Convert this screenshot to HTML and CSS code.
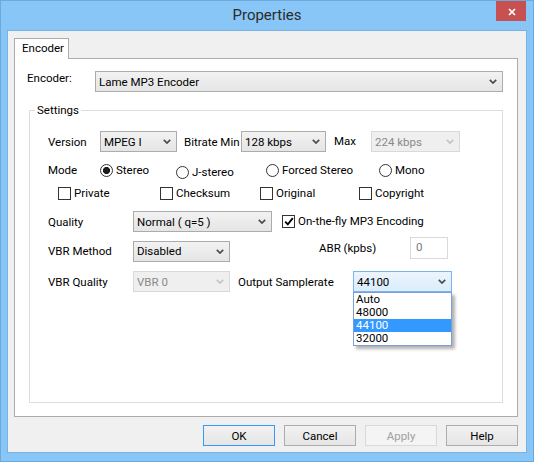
FILE: index.html
```html
<!DOCTYPE html>
<html>
<head>
<meta charset="utf-8">
<link rel="stylesheet" href="styles.css">
</head>
<body>
<div class="window">
  <div class="titlebar">
    <div class="title">Properties</div>
    <div class="close"><svg width="8" height="8" viewBox="0 0 8 8"><path d="M1 1L7 7M7 1L1 7" stroke="#fff" stroke-width="1.7" fill="none"/></svg></div>
  </div>
  <div class="client">
    <div class="tabs"><div class="tab">Encoder</div></div>
    <div class="panel">
      <div class="enc-row">
        <span class="enc-label">Encoder:</span>
        <div class="combo grow"><span class="val">Lame MP3 Encoder</span><svg class="chev" viewBox="0 0 8 5"><path d="M0.8 0.8L4 4L7.2 0.8"/></svg></div>
      </div>
      <fieldset class="group">
        <legend class="legend">Settings</legend>
        <div class="gbody">
          <div class="row">
            <span class="lbl w52">Version</span>
            <div class="combo w77"><span class="val">MPEG I</span><svg class="chev" viewBox="0 0 8 5"><path d="M0.8 0.8L4 4L7.2 0.8"/></svg></div>
            <span class="lbl ml7 w57">Bitrate Min</span>
            <div class="combo w85"><span class="val">128 kbps</span><svg class="chev" viewBox="0 0 8 5"><path d="M0.8 0.8L4 4L7.2 0.8"/></svg></div>
            <span class="lbl ml8 w37 up1">Max</span>
            <div class="combo w89 disabled"><span class="val">224 kbps</span><svg class="chev" viewBox="0 0 8 5"><path d="M0.8 0.8L4 4L7.2 0.8"/></svg></div>
          </div>
          <div class="row mode">
            <span class="lbl w52">Mode</span>
            <span class="opt w76"><span class="radio on"></span><span>Stereo</span></span>
            <span class="opt w90 low"><span class="radio"></span><span>J-stereo</span></span>
            <span class="opt w113"><span class="radio"></span><span>Forced Stereo</span></span>
            <span class="opt"><span class="radio"></span><span>Mono</span></span>
          </div>
          <div class="row checks">
            <span class="opt w102"><span class="check"></span><span>Private</span></span>
            <span class="opt w100"><span class="check"></span><span>Checksum</span></span>
            <span class="opt w99"><span class="check"></span><span>Original</span></span>
            <span class="opt"><span class="check"></span><span>Copyright</span></span>
          </div>
          <div class="row quality">
            <span class="lbl w85">Quality</span>
            <div class="combo w139"><span class="val">Normal ( q=5 )</span><svg class="chev" viewBox="0 0 8 5"><path d="M0.8 0.8L4 4L7.2 0.8"/></svg></div>
            <span class="opt ml10"><span class="check"><svg width="10" height="9" viewBox="0 0 10 9"><path d="M1.2 4.6L3.8 7.3L8.8 1.2" stroke="#000" stroke-width="1.9" fill="none"/></svg></span><span>On-the-fly MP3 Encoding</span></span>
          </div>
          <div class="row vbrm">
            <span class="lbl w85 mt4">VBR Method</span>
            <div class="combo w97 mt4"><span class="val">Disabled</span><svg class="chev" viewBox="0 0 8 5"><path d="M0.8 0.8L4 4L7.2 0.8"/></svg></div>
            <span class="lbl ml89 w91 tall">ABR (kpbs)</span>
            <div class="edit">0</div>
          </div>
          <div class="row vbrq">
            <span class="lbl w85">VBR Quality</span>
            <div class="combo w97 disabled"><span class="val">VBR 0</span><svg class="chev" viewBox="0 0 8 5"><path d="M0.8 0.8L4 4L7.2 0.8"/></svg></div>
            <span class="lbl ml8 w115">Output Samplerate</span>
            <div class="combo w99 focus"><span class="val">44100</span><svg class="chev" viewBox="0 0 8 5"><path d="M0.8 0.8L4 4L7.2 0.8"/></svg>
              <div class="list">
                <div class="item">Auto</div>
                <div class="item">48000</div>
                <div class="item sel">44100</div>
                <div class="item">32000</div>
              </div>
            </div>
          </div>
        </div>
      </fieldset>
    </div>
    <div class="buttons">
      <div class="btn default">OK</div>
      <div class="btn">Cancel</div>
      <div class="btn disabled">Apply</div>
      <div class="btn">Help</div>
    </div>
  </div>
</div>
</body>
</html>
```
FILE: styles.css
```css
* { box-sizing: border-box; }
html, body { margin: 0; padding: 0; }
body {
  width: 534px;
  height: 462px;
  overflow: hidden;
  font-family: Roboto, "Noto Sans", sans-serif;
  font-size: 11.5px;
  color: #000;
}
.window {
  width: 534px;
  height: 462px;
  background: #89c6f8;
  border: 1px solid #6ea9de;
  display: flex;
  flex-direction: column;
}
.titlebar {
  height: 29px;
  display: flex;
  flex-shrink: 0;
}
.title {
  flex: 1;
  text-align: center;
  padding-left: 37px;
  line-height: 28px;
  font-size: 15px;
  color: #2b2b2b;
}
.close {
  width: 30px;
  height: 20px;
  margin-right: 7px;
  background: #c75050;
  display: flex;
  align-items: center;
  justify-content: center;
  padding-top: 2px;
  padding-left: 1px;
}
.client {
  margin: 0 6px;
  height: 423px;
  flex-shrink: 0;
  background: #f0f0f0;
  border: 1px solid #7cb0e0;
  padding-top: 7px;
}
.tabs {
  display: flex;
  padding-left: 6px;
}
.tab {
  width: 55px;
  height: 21px;
  margin-bottom: -1px;
  border: 1px solid #acacac;
  border-bottom: none;
  background: #fff;
  position: relative;
  z-index: 1;
  padding-left: 7px;
  line-height: 18px;
}
.panel {
  margin-left: 6px;
  width: 504px;
  height: 359px;
  border: 1px solid #acacac;
  background: #fff;
  padding: 12px 14px 0 12px;
}
.enc-row {
  display: flex;
  height: 21px;
}
.enc-label {
  width: 68px;
  line-height: 15px;
  flex-shrink: 0;
}
.grow { flex: 1; }
.group {
  margin: 11px 0 0 2px;
  padding: 0;
  border: 1px solid #dcdcdc;
  height: 300px;
  min-width: 0;
}
.legend {
  margin-left: 5px;
  padding: 0 2px;
  line-height: 15px;
}
.gbody {
  padding: 13px 0 0 18px;
}
.row {
  display: flex;
  align-items: center;
  height: 21px;
}
.row.mode {
  margin-top: 12px;
  height: 13px;
  align-items: flex-start;
}
.row.checks {
  margin-top: 10px;
  height: 13px;
  margin-left: 10px;
}
.row.quality { margin-top: 11px; }
.row.vbrm {
  margin-top: 5px;
  height: 25px;
  align-items: flex-start;
}
.row.vbrq { margin-top: 9px; }

.lbl { flex-shrink: 0; white-space: nowrap; }
.mode .lbl { line-height: 13px; }
.mt4 { margin-top: 4px; line-height: 21px; }
.tall { line-height: 22px; }
.up1 { margin-top: -2px; }
.ml7 { margin-left: 7px; }
.ml8 { margin-left: 8px; }
.ml10 { margin-left: 10px; }
.ml89 { margin-left: 89px; }
.w37 { width: 37px; }
.w52 { width: 52px; }
.w57 { width: 57px; }
.w76 { width: 76px; }
.w77 { width: 77px; }
.w85 { width: 85px; }
.w89 { width: 89px; }
.w90 { width: 90px; }
.w91 { width: 91px; }
.w97 { width: 97px; }
.w99 { width: 99px; }
.w100 { width: 100px; }
.w102 { width: 102px; }
.w113 { width: 113px; }
.w115 { width: 115px; }
.w139 { width: 139px; }

.combo {
  height: 21px;
  border: 1px solid #acacac;
  background: linear-gradient(#f2f2f2, #e5e5e5);
  display: flex;
  align-items: center;
  padding: 0 5px 0 3px;
  flex-shrink: 0;
  white-space: nowrap;
}
.combo .val {
  flex: 1;
  overflow: hidden;
}
.chev {
  width: 8px;
  height: 5px;
  flex-shrink: 0;
}
.chev path {
  fill: none;
  stroke: #4a4a4a;
  stroke-width: 1.7;
}
.combo.disabled {
  border-color: #d9d9d9;
  background: #efefef;
  color: #8a8a8a;
}
.combo.disabled .chev path { stroke: #c4c4c4; }
.combo.focus {
  border-color: #7eb4ea;
  background: linear-gradient(#ecf5fd, #dbecfc);
  position: relative;
}

.opt {
  display: flex;
  align-items: center;
  gap: 3px;
  flex-shrink: 0;
  line-height: 13px;
  white-space: nowrap;
}
.opt.low { margin-top: 2px; }
.radio {
  width: 13px;
  height: 13px;
  border: 1px solid #333;
  border-radius: 50%;
  background: #fff;
  flex-shrink: 0;
}
.radio.on {
  background: radial-gradient(circle at center, #1c1c1c 0, #1c1c1c 3.2px, #fff 3.9px);
}
.check {
  width: 13px;
  height: 13px;
  border: 1px solid #333;
  background: #fff;
  flex-shrink: 0;
  display: flex;
  align-items: center;
  justify-content: center;
}
.edit {
  width: 38px;
  height: 22px;
  border: 1px solid #d9d9d9;
  background: #fff;
  color: #7a7a7a;
  padding: 3px 0 0 5px;
  line-height: 13px;
  flex-shrink: 0;
}

.list {
  position: absolute;
  top: calc(100% + 1px);
  left: -1px;
  width: 99px;
  border: 1px solid #7a9fd6;
  background: #fff;
  box-shadow: 3px 3px 3px rgba(0, 0, 0, 0.3);
  z-index: 5;
}
.item {
  height: 13px;
  line-height: 13px;
  padding-left: 2px;
}
.item.sel {
  background: #3399ff;
  color: #fff;
}

.buttons {
  display: flex;
  justify-content: flex-end;
  gap: 9px;
  margin-top: 8px;
  padding-right: 8px;
}
.btn {
  width: 72px;
  height: 21px;
  border: 1px solid #acacac;
  background: linear-gradient(#f2f2f2, #e5e5e5);
  display: flex;
  align-items: center;
  justify-content: center;
}
.btn.default { border-color: #3399ff; }
.btn.disabled {
  border-color: #d9d9d9;
  background: #f4f4f4;
  color: #a0a0a0;
}
```
